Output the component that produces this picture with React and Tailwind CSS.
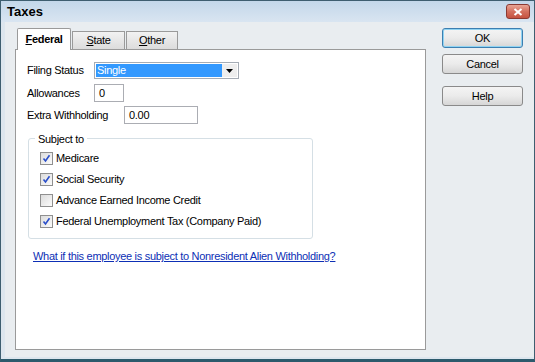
import React from "react";

const font = { fontFamily: '"Liberation Sans", Arial, sans-serif' };

function Check({ checked }) {
  return (
    <div className="w-[13px] h-[13px] border border-[#8f8f8f] bg-gradient-to-br from-[#dcdcdc] to-[#fbfbfb] flex items-center justify-center">
      {checked && (
        <svg width="9" height="9" viewBox="0 0 9 9">
          <path d="M1.5 4.5 L3.5 7 L7.5 1.2" fill="none" stroke="#2a4ec9" strokeWidth="1.6" />
        </svg>
      )}
    </div>
  );
}

function Btn({ children, focus }) {
  return (
    <div
      className={
        "h-[20px] w-[81px] flex items-center justify-center rounded-[3px] border text-[11px] text-black bg-gradient-to-b from-[#f4f4f4] via-[#ebebeb] to-[#d6d6d6] " +
        (focus ? "border-[#3c7fb1] shadow-[inset_0_0_0_1px_#8fd3f2]" : "border-[#8a8a8a]")
      }
    >
      {children}
    </div>
  );
}

export default function App() {
  return (
    <div
      className="w-[535px] h-[362px] flex flex-col border border-[#3e5e70] border-b-[3px] border-b-[#2c5a6c] bg-[#dde6ee] text-black text-[11px] tracking-[-0.3px] overflow-hidden"
      style={font}
    >
      <div className="h-[21px] flex items-center justify-between pl-[6px] pr-[4px] bg-gradient-to-b from-[#c3d7ea] to-[#d9e5f1]">
        <span className="font-bold text-[13px] leading-none tracking-normal">Taxes</span>
        <div className="w-[24px] h-[15px] rounded-[3px] border border-[#8b3a33] bg-gradient-to-b from-[#e8a595] via-[#d4705f] to-[#c55240] flex items-center justify-center">
          <svg width="10" height="8" viewBox="0 0 10 8">
            <path d="M1.5 1 L8.5 7 M8.5 1 L1.5 7" stroke="white" strokeWidth="2" />
          </svg>
        </div>
      </div>
      <div className="flex-1 flex pl-[4px] pr-[4px] pb-[2px] bg-[#dde6ee]">
        <div className="flex-1 flex bg-[#e9edf0] pt-[6px] pl-[10px] pr-[17px] pb-[7px] gap-[16px]">
          <div className="w-[411px] flex flex-col">
            <div className="flex items-end h-[21px] pl-[2px] gap-[1px]">
              <div className="h-[22px] w-[54px] bg-white border border-b-0 border-[#9a9a9a] rounded-t-[2px] flex items-center justify-center font-bold relative z-10 mb-[-1px]">
                <span><u>F</u>ederal</span>
              </div>
              <div className="h-[18px] w-[53px] bg-gradient-to-b from-[#f2f2f2] to-[#dcdcdc] border border-b-0 border-[#9a9a9a] flex items-center justify-center">
                <span><u>S</u>tate</span>
              </div>
              <div className="h-[18px] w-[52px] bg-gradient-to-b from-[#f2f2f2] to-[#dcdcdc] border border-b-0 border-[#9a9a9a] flex items-center justify-center">
                <span><u>O</u>ther</span>
              </div>
            </div>
            <div className="flex-1 bg-white border border-[#9a9a9a] pt-[12px] pl-[11px] pr-[10px] flex flex-col">
              <div className="flex items-center h-[17px]">
                <span className="w-[67px]">Filing Status</span>
                <div className="w-[145px] h-[17px] border border-[#a5acb5] flex items-stretch p-[1px] bg-white">
                  <div className="flex-1 bg-[#3399ff] text-white flex items-center pl-[1px]">Single</div>
                  <div className="w-[15px] flex items-center justify-center bg-[#eeeeee]">
                    <svg width="7" height="4" viewBox="0 0 7 4"><path d="M0 0 H7 L3.5 4 Z" fill="#000" /></svg>
                  </div>
                </div>
              </div>
              <div className="flex items-center h-[18px] mt-[5px]">
                <span className="w-[67px]">Allowances</span>
                <div className="w-[30px] h-[18px] border border-[#abadb3] flex items-center pl-[4px]">0</div>
              </div>
              <div className="flex items-center h-[18px] mt-[4px]">
                <span className="w-[97px]">Extra Withholding</span>
                <div className="w-[74px] h-[18px] border border-[#abadb3] flex items-center pl-[4px]">0.00</div>
              </div>
              <div className="mt-[14px] ml-[1px] w-[285px] h-[101px] border border-[#d5dfe5] rounded-[3px] relative pt-[13px] pl-[11px] flex flex-col gap-[8px]">
                <span className="absolute -top-[8px] left-[6px] bg-white px-[3px]">Subject to</span>
                {[
                  ["Medicare", true],
                  ["Social Security", true],
                  ["Advance Earned Income Credit", false],
                  ["Federal Unemployment Tax (Company Paid)", true],
                ].map(([label, c]) => (
                  <div key={label} className="flex items-center gap-[3px] h-[13px]">
                    <Check checked={c} />
                    <span>{label}</span>
                  </div>
                ))}
              </div>
              <div className="mt-[9px] ml-[6px]">
                <span className="text-[#0d2fb5] underline">What if this employee is subject to Nonresident Alien Withholding?</span>
              </div>
            </div>
          </div>
          <div className="flex flex-col">
            <Btn focus>OK</Btn>
            <div className="mt-[6px]"><Btn>Cancel</Btn></div>
            <div className="mt-[12px]"><Btn>Help</Btn></div>
          </div>
        </div>
      </div>
    </div>
  );
}
